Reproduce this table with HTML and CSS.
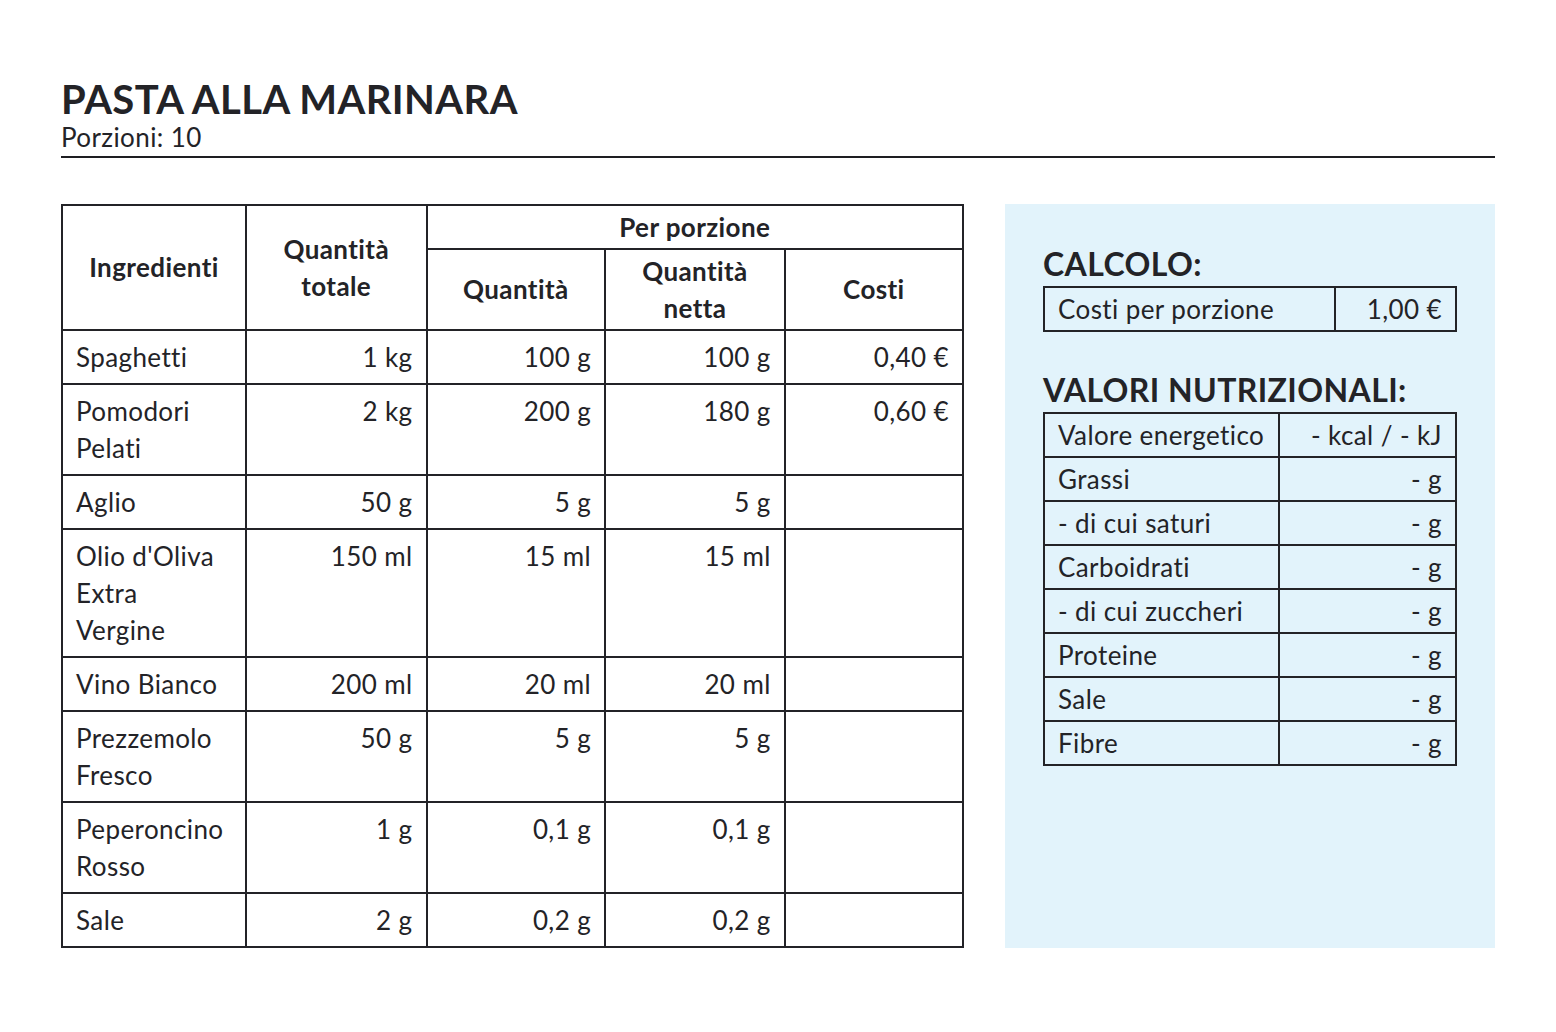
FILE: index.html
```html
<!DOCTYPE html>
<html lang="it">
<head>
<meta charset="utf-8">
<title>Pasta alla Marinara</title>
<link rel="stylesheet" href="styles.css">
</head>
<body>
<div class="page">
  <header class="head">
    <h1 class="title">PASTA ALLA MARINARA</h1>
    <div class="servings">Porzioni: 10</div>
  </header>
  <main class="content">
    <table class="recipe">
      <colgroup>
        <col class="c1"><col class="c2"><col class="c3"><col class="c4"><col class="c5">
      </colgroup>
      <thead>
        <tr>
          <th rowspan="2">Ingredienti</th>
          <th rowspan="2">Quantità<br>totale</th>
          <th colspan="3" class="per">Per porzione</th>
        </tr>
        <tr>
          <th>Quantità</th>
          <th>Quantità<br>netta</th>
          <th>Costi</th>
        </tr>
      </thead>
      <tbody>
        <tr><td>Spaghetti</td><td>1 kg</td><td>100 g</td><td>100 g</td><td>0,40 €</td></tr>
        <tr><td>Pomodori<br>Pelati</td><td>2 kg</td><td>200 g</td><td>180 g</td><td>0,60 €</td></tr>
        <tr><td>Aglio</td><td>50 g</td><td>5 g</td><td>5 g</td><td></td></tr>
        <tr><td>Olio d'Oliva<br>Extra<br>Vergine</td><td>150 ml</td><td>15 ml</td><td>15 ml</td><td></td></tr>
        <tr><td>Vino Bianco</td><td>200 ml</td><td>20 ml</td><td>20 ml</td><td></td></tr>
        <tr><td>Prezzemolo<br>Fresco</td><td>50 g</td><td>5 g</td><td>5 g</td><td></td></tr>
        <tr><td>Peperoncino<br>Rosso</td><td>1 g</td><td>0,1 g</td><td>0,1 g</td><td></td></tr>
        <tr><td>Sale</td><td>2 g</td><td>0,2 g</td><td>0,2 g</td><td></td></tr>
      </tbody>
    </table>
    <aside class="panel">
      <h2 class="panel-title">CALCOLO:</h2>
      <table class="info calc">
        <tr><td class="k">Costi per porzione</td><td class="v">1,00 €</td></tr>
      </table>
      <h2 class="panel-title second">VALORI NUTRIZIONALI:</h2>
      <table class="info nutri">
        <tr><td class="k">Valore energetico</td><td class="v">- kcal / - kJ</td></tr>
        <tr><td class="k">Grassi</td><td class="v">- g</td></tr>
        <tr><td class="k">- di cui saturi</td><td class="v">- g</td></tr>
        <tr><td class="k">Carboidrati</td><td class="v">- g</td></tr>
        <tr><td class="k">- di cui zuccheri</td><td class="v">- g</td></tr>
        <tr><td class="k">Proteine</td><td class="v">- g</td></tr>
        <tr><td class="k">Sale</td><td class="v">- g</td></tr>
        <tr><td class="k">Fibre</td><td class="v">- g</td></tr>
      </table>
    </aside>
  </main>
</div>
</body>
</html>
```
FILE: styles.css
```css
* { box-sizing: border-box; }
html, body {
  margin: 0;
  padding: 0;
  background: #ffffff;
}
body {
  font-family: Lato, "Open Sans", sans-serif;
  color: #232327;
  letter-spacing: 0.4px;
}
.page {
  padding: 76px 61px 0 61px;
}
.head {
  border-bottom: 2px solid #1e1e22;
  padding-bottom: 4px;
}
.title {
  margin: 0;
  font-size: 40px;
  font-weight: 700;
  line-height: 46px;
}
.servings {
  font-size: 26px;
  line-height: 30px;
}
.content {
  display: flex;
  align-items: stretch;
  gap: 41px;
  margin-top: 46px;
}
.recipe {
  border-collapse: collapse;
  width: 903px;
  flex: 0 0 903px;
  font-size: 26px;
  line-height: 37px;
}
.recipe .c1 { width: 184px; }
.recipe .c2 { width: 181px; }
.recipe .c3 { width: 179px; }
.recipe .c4 { width: 180px; }
.recipe .c5 { width: 179px; }
.recipe th, .recipe td {
  border: 2px solid #232327;
}
.recipe th {
  font-weight: 700;
  text-align: center;
  padding: 2.5px 12px;
  vertical-align: middle;
}
.recipe td {
  padding: 7.5px 13px;
  vertical-align: top;
  text-align: right;
}
.recipe td:first-child {
  text-align: left;
}
.panel {
  flex: 1 1 auto;
  background: #e2f3fb;
  padding: 40px 38px 36px;
}
.panel-title {
  margin: 0 0 2px 0;
  font-size: 32px;
  font-weight: 700;
  line-height: 40px;
}
.panel-title.second {
  margin-top: 38px;
}
.info {
  border-collapse: collapse;
  width: 414px;
  font-size: 26px;
  line-height: 37px;
}
.info td {
  border: 2px solid #232327;
  padding: 2.5px 13px;
}
.info .v { text-align: right; }
.calc .k { width: 291px; }
.nutri .k { width: 235px; }
```
